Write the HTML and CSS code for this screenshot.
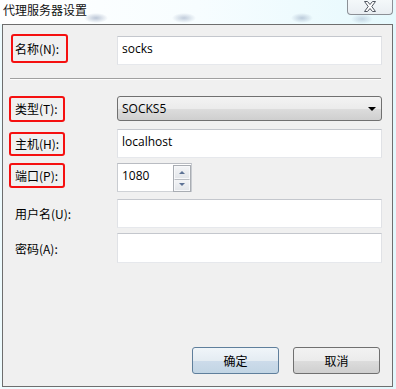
FILE: index.html
```html
<!DOCTYPE html>
<html lang="zh-CN">
<head>
    <meta charset="UTF-8">
    <title>代理服务器设置</title>
    <link rel="stylesheet" href="styles.css">
</head>
<body>

    <!-- Title bar -->
    <div class="titlebar">
        <span class="title">代理服务器设置</span>
        <div class="close-btn">
            <svg width="14" height="11" viewBox="0 0 14 11">
                <polygon points="1.5,0.5 4.5,0.5 7,3.5 9.5,0.5 12.5,0.5 8.8,5.5 12.5,10.5 9.5,10.5 7,7.5 4.5,10.5 1.5,10.5 5.2,5.5" fill="#fff" stroke="#505660" stroke-width="1"/>
            </svg>
        </div>
    </div>

    <!-- Dialog client area -->
    <div class="client">
        <div class="row row-name">
            <div class="label"><span class="mark mark-name">名称(N):</span></div>
            <div class="textbox">socks</div>
        </div>

        <div class="separator"></div>

        <div class="row row-type">
            <div class="label"><span class="mark">类型(T):</span></div>
            <div class="combo">
                <span>SOCKS5</span>
                <span class="combo-arrow"></span>
            </div>
        </div>

        <div class="row row-host">
            <div class="label"><span class="mark mark-host">主机(H):</span></div>
            <div class="textbox">localhost</div>
        </div>

        <div class="row row-port">
            <div class="label"><span class="mark mark-port">端口(P):</span></div>
            <div class="textbox port">
                <span>1080</span>
                <div class="spinner">
                    <div class="spin-btn"><span class="tri-up"></span></div>
                    <div class="spin-btn"><span class="tri-down"></span></div>
                </div>
            </div>
        </div>

        <div class="row row-user">
            <div class="label">用户名(U):</div>
            <div class="textbox"></div>
        </div>

        <div class="row row-pass">
            <div class="label">密码(A):</div>
            <div class="textbox"></div>
        </div>

        <div class="buttons">
            <button class="btn btn-default">确定</button>
            <button class="btn">取消</button>
        </div>
    </div>

</body>
</html>
```

FILE: styles.css
```css
* {
    margin: 0;
    padding: 0;
    box-sizing: border-box;
}

/* General layout */
body {
    width: 396px;
    height: 389px;
    overflow: hidden;
    font-family: "Open Sans", "Noto Sans CJK SC", sans-serif;
    font-size: 12px;
    color: #000;
    background: linear-gradient(90deg, #eefbfe 0%, #f6fdff 40%, #e2f7fc 100%);
}

/* Title bar (aero glass) */
.titlebar {
    height: 24px;
    display: flex;
    align-items: flex-start;
    justify-content: space-between;
    background:
        radial-gradient(ellipse 12px 5px at 96px 18px, rgba(110, 130, 165, 0.45), transparent),
        radial-gradient(ellipse 12px 5px at 184px 18px, rgba(110, 130, 165, 0.4), transparent),
        radial-gradient(ellipse 11px 5px at 302px 18px, rgba(110, 130, 165, 0.4), transparent),
        radial-gradient(ellipse 11px 5px at 362px 19px, rgba(110, 130, 165, 0.3), transparent),
        linear-gradient(90deg, #ffffff 0%, #f7fdff 50%, #e6f9fd 100%);
}

.title {
    font-family: "Noto Sans CJK SC", sans-serif;
    font-size: 12px;
    line-height: 18px;
    padding-left: 3px;
    padding-top: 1px;
    color: #111;
}

.close-btn {
    width: 46px;
    height: 15px;
    margin-right: 3px;
    border: 1px solid #8c9096;
    border-top: none;
    border-radius: 0 0 4px 4px;
    background: linear-gradient(#f4f8fa, #e9eef2);
    display: flex;
    justify-content: center;
    padding-top: 1px;
}

/* Client area */
.client {
    margin-left: 2px;
    width: 391px;
    height: 363px;
    border: 1px solid #6e6e6e;
    background-color: #f0f0f0;
    display: flex;
    flex-direction: column;
    padding: 0 10px 12px 12px;
}

.row {
    display: flex;
    align-items: center;
}

.label {
    width: 102px;
    font-family: "Noto Sans CJK SC", sans-serif;
    font-size: 12px;
}

.row-name { margin-top: 11px; height: 29px; }
.row-type { margin-top: 16px; height: 25px; }
.row-host { margin-top: 8px; height: 29px; }
.row-port { margin-top: 5px; height: 29px; }
.row-user { margin-top: 7px; height: 29px; }
.row-pass { margin-top: 5px; height: 30px; }

/* Red annotation boxes */
.mark {
    display: inline-flex;
    align-items: center;
    width: 56px;
    height: 26px;
    margin-left: -6px;
    padding-left: 4px;
    border: 2px solid #f51010;
    border-radius: 3px;
}

.mark-name {
    width: 57px;
    height: 29px;
    margin-left: -4px;
    padding-left: 2px;
    margin-bottom: 4px;
}

.mark-host { height: 24px; }

.mark-port {
    height: 25px;
    margin-bottom: 5px;
}

/* Text boxes */
.textbox {
    width: 265px;
    height: 100%;
    background: #fff;
    border: 1px solid;
    border-color: #c4c7cd #e0e2e6 #e6e8ec #e0e2e6;
    padding: 3px 4px 0 4px;
    line-height: 18px;
    font-size: 12px;
}

.textbox.port {
    width: 75px;
    display: flex;
    justify-content: space-between;
    padding-right: 0;
    border-color: #b9bcc2 #c9ccd1 #cfd2d6 #c9ccd1;
}

.spinner {
    width: 18px;
    margin-top: -2px;
    height: 27px;
    display: flex;
    flex-direction: column;
    border: 1px solid #a9adb3;
}

.spin-btn {
    flex: 1;
    display: flex;
    align-items: center;
    justify-content: center;
    border: 1px solid #f7f8fa;
    background: linear-gradient(#f3f4f6, #e3e6ea);
}

.spin-btn + .spin-btn {
    border-top: 1px solid #b9bdc3;
}

.tri-up {
    border-left: 3px solid transparent;
    border-right: 3px solid transparent;
    border-bottom: 3px solid #5d7295;
}

.tri-down {
    border-left: 3px solid transparent;
    border-right: 3px solid transparent;
    border-top: 3px solid #5d7295;
}

/* Combo box */
.combo {
    width: 265px;
    height: 100%;
    border: 1px solid #707070;
    border-radius: 3px;
    background: linear-gradient(#f3f3f3 0%, #ebebeb 50%, #dddddd 50%, #cfcfcf 100%);
    display: flex;
    align-items: center;
    justify-content: space-between;
    padding: 0 5px 0 4px;
    font-size: 12px;
}

.combo-arrow {
    border-left: 4px solid transparent;
    border-right: 4px solid transparent;
    border-top: 4px solid #000;
}

/* Separator line */
.separator {
    margin-top: 13px;
    margin-left: -5px;
    width: 371px;
    height: 2px;
    border-top: 1px solid #a0a0a0;
    border-bottom: 1px solid #fdfdfd;
}

/* Dialog buttons */
.buttons {
    margin-top: auto;
    display: flex;
    justify-content: flex-end;
    gap: 14px;
    padding-right: 2px;
}

.btn {
    width: 87px;
    height: 27px;
    border: 1px solid #707070;
    border-radius: 3px;
    background: linear-gradient(#f2f2f2 0%, #ebebeb 50%, #dddddd 50%, #cfcfcf 100%);
    font-family: "Noto Sans CJK SC", sans-serif;
    font-size: 12px;
    color: #000;
}

.btn-default {
    border-color: #5f7f9c;
    background: linear-gradient(#f0f5f9 0%, #e4ecf2 50%, #cddceb 50%, #c2d5e4 100%);
}
```
